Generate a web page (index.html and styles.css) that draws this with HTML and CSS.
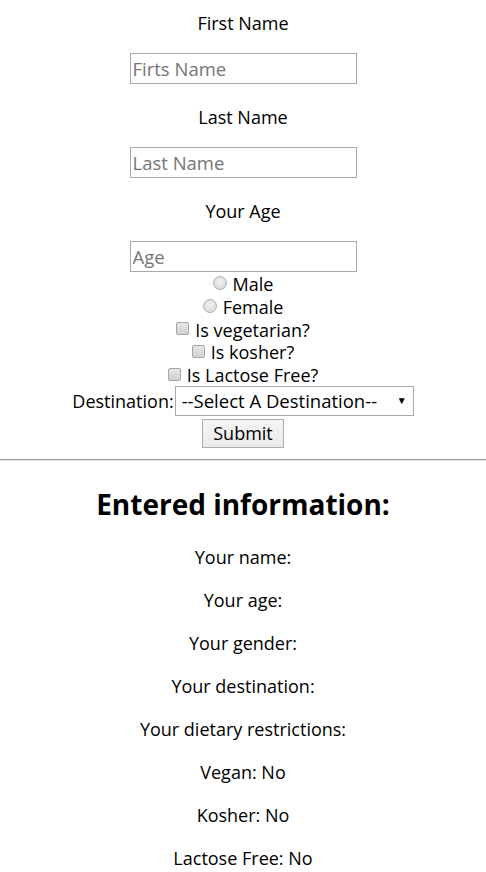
FILE: index.html
```html
<!DOCTYPE html>
<html>
<head>
<meta charset="utf-8">
<link rel="stylesheet" href="styles.css">
</head>
<body>
<form class="form">
  <div class="field-label first">First Name</div>
  <input class="text-input" type="text" placeholder="Firts Name">
  <div class="field-label">Last Name</div>
  <input class="text-input" type="text" placeholder="Last Name">
  <div class="field-label">Your Age</div>
  <input class="text-input" type="text" placeholder="Age">
  <div class="options">
    <label class="opt"><input class="radio" type="radio" name="gender"> Male</label>
    <label class="opt"><input class="radio" type="radio" name="gender"> Female</label>
    <label class="opt"><input class="check" type="checkbox"> Is vegetarian?</label>
    <label class="opt"><input class="check" type="checkbox"> Is kosher?</label>
    <label class="opt"><input class="check" type="checkbox"> Is Lactose Free?</label>
  </div>
  <div class="dest-row">
    <span class="dest-label">Destination:</span>
    <span class="select-wrap">
      <select class="select">
        <option>--Select A Destination--</option>
      </select>
    </span>
  </div>
  <button class="submit" type="button">Submit</button>
</form>
<hr class="rule">
<section class="output">
  <h2 class="title">Entered information:</h2>
  <p class="line">Your name: </p>
  <p class="line">Your age: </p>
  <p class="line">Your gender: </p>
  <p class="line">Your destination: </p>
  <p class="line">Your dietary restrictions:</p>
  <p class="line">Vegan: No</p>
  <p class="line">Kosher: No</p>
  <p class="line">Lactose Free: No</p>
</section>
</body>
</html>
```
FILE: styles.css
```css
html, body {
  margin: 0;
  padding: 0;
  background: #fff;
}
body {
  font-family: "Open Sans", "Noto Sans", sans-serif;
  font-size: 18px;
  color: #000;
}
.form {
  display: flex;
  flex-direction: column;
  align-items: center;
}
.field-label {
  line-height: 24px;
  margin: 21px 0 18px;
  text-align: center;
}
.field-label.first {
  margin-top: 11px;
}
.text-input {
  box-sizing: border-box;
  width: 227px;
  height: 31px;
  border: 1px solid #a9a9a9;
  padding: 0 2px;
  font-family: inherit;
  font-size: 18.5px;
  margin: 0;
  outline: none;
}
.text-input::placeholder {
  color: #757575;
}
.options {
  display: flex;
  flex-direction: column;
  align-items: center;
  margin-top: 1px;
}
.opt {
  line-height: 22.8px;
  display: flex;
  align-items: center;
}
.radio, .check {
  appearance: none;
  -webkit-appearance: none;
  width: 13px;
  height: 13px;
  margin: 0 6px 3px 0;
  border: 1px solid #a6a6a6;
  background: linear-gradient(#e6e6e6, #d2d2d2);
  box-sizing: border-box;
}
.radio {
  width: 14px;
  height: 14px;
  border-radius: 50%;
  border-color: #b0b0b0;
  background: radial-gradient(circle at 50% 40%, #f2f2f2, #d4d4d4);
}
.check {
  border-radius: 2px;
}
.dest-row {
  display: flex;
  align-items: center;
  margin-top: -1px;
}
.dest-label {
  line-height: 24px;
}
.select-wrap {
  position: relative;
  display: inline-block;
  margin-left: 1px;
}
.select-wrap::after {
  content: "\25BC";
  position: absolute;
  right: 7px;
  top: 7px;
  font-size: 10px;
  color: #000;
  pointer-events: none;
}
.select {
  appearance: none;
  -webkit-appearance: none;
  box-sizing: border-box;
  width: 239px;
  height: 30px;
  border: 1px solid #a9a9a9;
  border-radius: 0;
  background: #fff;
  font-family: inherit;
  font-size: 18.5px;
  padding: 0 0 0 6px;
  margin: 0;
  color: #000;
}
.submit {
  margin-top: 3px;
  box-sizing: border-box;
  width: 82px;
  height: 29px;
  border: 1px solid #adadad;
  background: linear-gradient(#f6f6f6, #e8e8e8);
  font-family: inherit;
  font-size: 18px;
  padding: 0;
  color: #000;
}
.rule {
  margin: 11px 0 0;
  border: 0;
  border-top: 1px solid #999;
  border-bottom: 1px solid #e4e4e4;
  height: 0;
}
.output {
  text-align: center;
}
.title {
  font-size: 28px;
  font-weight: bold;
  margin: 24px 0 0;
  padding-bottom: 3px;
  line-height: 38px;
}
.line {
  margin: 19px 0 0;
  line-height: 24px;
}
```
